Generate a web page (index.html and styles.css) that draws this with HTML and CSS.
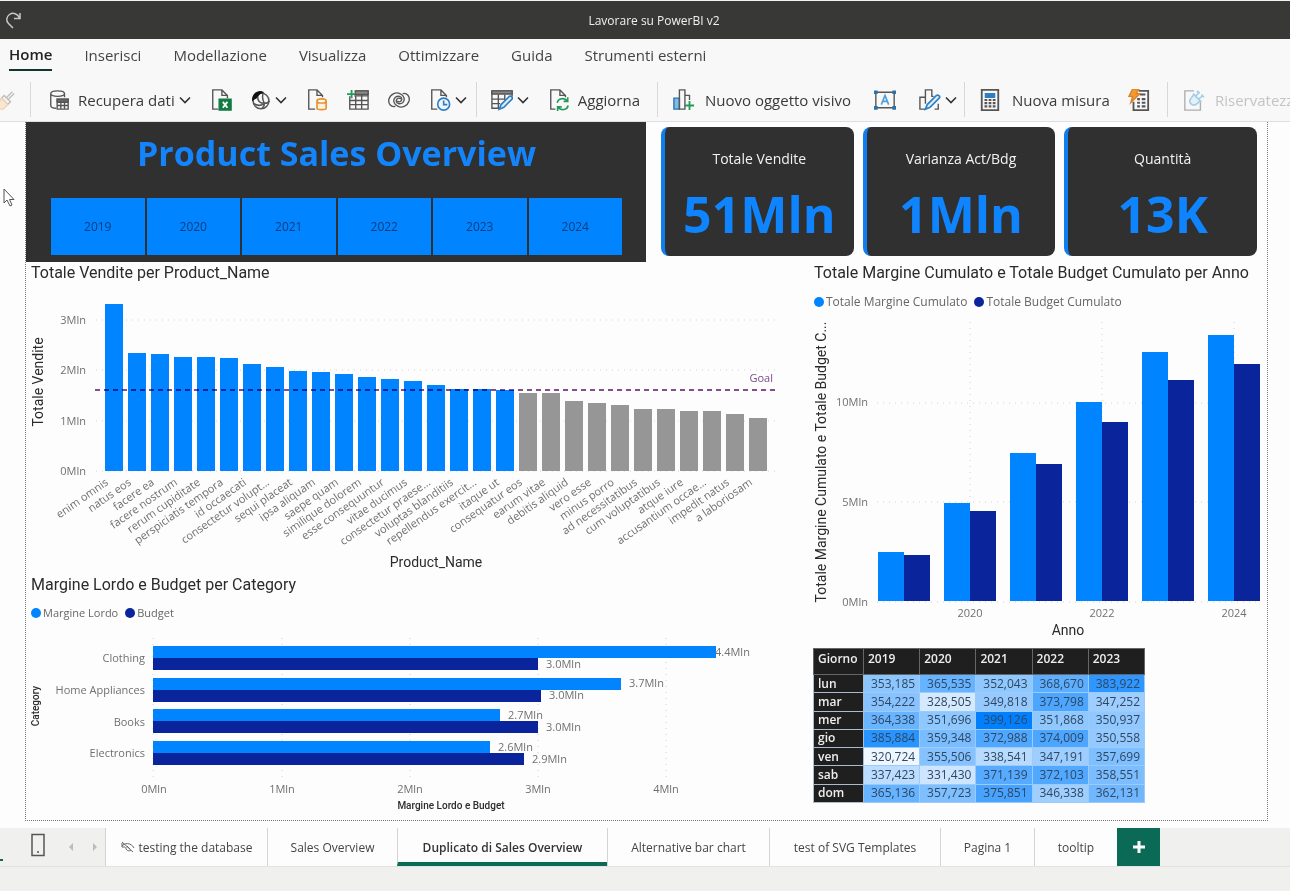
FILE: index.html
```html
<!DOCTYPE html>
<html lang="it">
<head>
<meta charset="utf-8">
<meta name="viewport" content="width=device-width, initial-scale=1">
<title>Lavorare su PowerBI v2</title>
<link rel="stylesheet" href="styles.css">
</head>
<body>
<header class="titlebar">
  <button class="redo" aria-label="Ripeti"><svg width="18" height="18" viewBox="0 0 18 18"><path d="M16 2v5.500h-6M15.500 7C14 3 9 1 5.500 3.500C2 6 2 10 4.500 12.500L9 17"/></svg></button>
  <h1>Lavorare su PowerBI v2</h1>
</header>

<nav class="menu">
  <button class="on">Home</button>
  <button>Inserisci</button>
  <button>Modellazione</button>
  <button>Visualizza</button>
  <button>Ottimizzare</button>
  <button>Guida</button>
  <button>Strumenti esterni</button>
</nav>

<div class="ribbon">
  <div class="group g-clip">
    <button aria-label="Copia formato"><svg class="ic faded" viewBox="0 0 24 24"><path d="M20 3l-6 6M22 5l-6 6" stroke="#777"/><path d="M11 7l7 7-3 3-7-7z" stroke="#777" fill="#eee"/><path d="M8 10l7 7-5 5H2z" fill="#f8d3a8" stroke="#e9a35c"/></svg></button>
  </div>
  <div class="group g-data">
    <button><svg class="ic" viewBox="0 0 24 24"><path d="M3 5c0-4 15-4 15 0s-15 4-15 0v13c0 2 3 3 6 3M18 5v4"/><path d="M10 11h12v11H10zM10 14.500h12M10 18h12M14 14.500V22M18 14.500V22"/><path d="M10 11h12v3H10z" fill="#666"/></svg><span>Recupera dati</span><svg class="chev" viewBox="0 0 12 8"><path d="M1 1.500l5 5 5-5"/></svg></button>
    <button aria-label="Cartella di lavoro Excel"><svg class="ic" viewBox="0 0 24 24"><path d="M9 22H3V1h10l6 6v3M13 1v6h6"/><path d="M10 11h13v12H10z" fill="#107c41" stroke="#107c41"/><path d="M14 14l5 6.500M19 14l-5 6.500" stroke="#fff" stroke-width="2"/></svg></button>
    <button aria-label="Hub dati OneLake"><svg class="ic sm" viewBox="0 0 24 24"><circle cx="12" cy="13" r="9.500" stroke-width="1.800"/><path d="M2 12C2 5 8 0 15 3c-4 0-6 2-7 5-1 2-4 2-6 4z" fill="#111" stroke="#111"/><path d="M8 8c0 5 3 8 8 8 3 0 5-1 6-3M15 3c-2 4-1 9 1 13M3 16c4 3 9 3 13 0M16 16c0 3-1 5-3 6" stroke-width="1.800"/></svg><svg class="chev" viewBox="0 0 12 8"><path d="M1 1.500l5 5 5-5"/></svg></button>
    <button aria-label="SQL Server"><svg class="ic" viewBox="0 0 24 24"><path d="M10 22H3V1h9l6 6v2M12 1v6h6"/><path d="M12 13v8c0 2 10 2 10 0v-8M12 13c0-3 10-3 10 0s-10 3-10 0" stroke="#e8922e" fill="#fdf1e2" stroke-width="1.800"/></svg></button>
    <button aria-label="Immetti dati"><svg class="ic" viewBox="0 0 24 24"><path d="M3 8v14h20V2H9M3 12.500h20M3 17h20M9.500 8v14M16 6v16M8 7.500h15"/><path d="M9 2h14v4H9z" fill="#888"/><path d="M5 1v9M0 5.500h9" stroke="#239a57" stroke-width="2"/></svg></button>
    <button aria-label="Dataverse"><svg class="ic" viewBox="0 0 24 24"><path d="M8 19c-5 1-8-3-7-8C3 5 9 3 13 5c5 2 6 7 3 10-3 2-7 1-7-2s3-4 5-2"/><path d="M16 5c5-1 8 3 7 8-2 6-8 8-12 6-5-2-6-7-3-10 3-2 7-1 7 2s-3 4-5 2"/></svg></button>
    <button aria-label="Origini recenti"><svg class="ic" viewBox="0 0 24 24"><path d="M9 22H3V1h10l6 6v2M13 1v6h6"/><circle cx="16" cy="16.500" r="6.500" stroke="#2f7fc0" fill="#eef6fd" stroke-width="1.800"/><path d="M16 12.500v4.500h4" stroke="#2f7fc0" stroke-width="1.800"/></svg><svg class="chev" viewBox="0 0 12 8"><path d="M1 1.500l5 5 5-5"/></svg></button>
  </div>
  <div class="group g-query">
    <button aria-label="Trasforma dati"><svg class="ic" viewBox="0 0 24 24"><path d="M9 21H1V2h22v6M1 11h14M1 16h9M8 6v15M15 6v6"/><path d="M1 2h22v3.500H1z" fill="#888"/><path d="M9 22l2-5L20 8c2-1 4 1 3 3l-9 9z" fill="#dceefb" stroke="#2f7fc0" stroke-width="1.800"/></svg><svg class="chev" viewBox="0 0 12 8"><path d="M1 1.500l5 5 5-5"/></svg></button>
    <button><svg class="ic" viewBox="0 0 24 24"><path d="M8 22H3V1h10l6 6v2M13 1v6h6"/><path d="M10 15c1-5 8-6 11-2M21.500 9v4.500H17M22 18c-1 5-8 6-11 2M10.500 24v-4.500H15" stroke="#239a57" stroke-width="1.800"/></svg><span>Aggiorna</span></button>
  </div>
  <div class="group g-insert">
    <button><svg class="ic" viewBox="0 0 24 24"><path d="M1 10h6v12H1z" fill="#7dbbea" stroke="#2b72ad"/><path d="M7 22V1h6v21zM13 7h5v5"/><path d="M18 13v10M13 18h10" stroke="#239a57" stroke-width="2"/></svg><span>Nuovo oggetto visivo</span></button>
    <button aria-label="Casella di testo"><svg class="ic" viewBox="0 0 24 24"><path d="M2 3.500h20v17H2z"/><path d="M0 1.500h4v4H0zM20 1.500h4v4h-4zM0 18.500h4v4H0zM20 18.500h4v4h-4z" fill="#2b72ad" stroke="none"/><path d="M8 17l4-10 4 10M9.500 13.500h5" stroke="#4d9fdd" stroke-width="1.800"/></svg></button>
    <button aria-label="Altri oggetti visivi"><svg class="ic" viewBox="0 0 24 24"><path d="M7 22H1V9h6V1h7v7h2M17 22h4v-6M7 9v7"/><path d="M7 22l2-5L19 7c2-1 5 1 3 3L12 20z" fill="#dceefb" stroke="#2f7fc0" stroke-width="1.800"/></svg><svg class="chev" viewBox="0 0 12 8"><path d="M1 1.500l5 5 5-5"/></svg></button>
  </div>
  <div class="group g-calc">
    <button><svg class="ic" viewBox="0 0 24 24"><path d="M3 1h18v22H3z" stroke-width="2"/><path d="M7 5h10v4H7z" fill="#2f7fc0" stroke="#2f7fc0"/><path d="M6 12h3M10.500 12h3M15 12h3M6 15.500h3M10.500 15.500h3M15 15.500h3M6 19h3M10.500 19h3M15 19h3" stroke-width="2.400"/></svg><span>Nuova misura</span></button>
    <button aria-label="Misura rapida"><svg class="ic" viewBox="0 0 24 24"><path d="M12 2h10v21H6v-9" stroke-width="2"/><path d="M13 6h6M10 11h3M15 11h4M10 15h3M15 15h4M10 19h3M15 19h4" stroke-width="2.400"/><path d="M5 0h7L9 5h4L3 15l2-7H1z" fill="#f59b2c" stroke="#d9822b"/></svg></button>
  </div>
  <div class="group g-sens">
    <button disabled><svg class="ic faded" viewBox="0 0 24 24"><path d="M12 2H2v21h17v-9"/><path d="M12 6l7 7-5 4c-4 2-8-2-6-6zM14 8l4-5M17 11l5-4M12 6l3 3M11 5l9 9M15 2l3 3M20 6l3 3" stroke="#3f9bd8" fill="#cfe8fa" stroke-width="1.800"/></svg><span>Riservatezza</span></button>
  </div>
</div>

<main class="canvas">
  <svg class="cursor" width="12" height="19" viewBox="0 0 12 19"><path d="M1 1v14l3-3 3 6 2-1-2.500-5.500H11z"/></svg>
  <div class="report">
    <div class="top">
      <section class="banner">
        <h2>Product Sales Overview</h2>
        <div class="years">
          <button>2019</button><button>2020</button><button>2021</button><button>2022</button><button>2023</button><button>2024</button>
        </div>
      </section>
      <div class="cards">
        <article><h3>Totale Vendite</h3><p>51Mln</p></article>
        <article><h3>Varianza Act/Bdg</h3><p>1Mln</p></article>
        <article><h3>Quantità</h3><p>13K</p></article>
      </div>
    </div>

    <div class="body">
      <div class="col">
        <section>
          <h2 class="vt">Totale Vendite per Product_Name</h2>
          <svg class="chart" viewBox="26 282 780 292">
            <g class="grid"><path d="M96 320H777M96 370H777M96 421H777M96 471H777"/></g>
            <g class="axis end"><text x="86" y="324">3Mln</text><text x="86" y="374">2Mln</text><text x="86" y="425">1Mln</text><text x="86" y="475">0Mln</text></g>
            <g fill="#0084ff">
              <path d="M105 304h18v167h-18zM128 353h18v118h-18zM151 354h18v117h-18zM174 357h18v114h-18zM197 357h18v114h-18zM220 358h18v113h-18zM243 364h18v107h-18zM266 367h18v104h-18zM289 371h18v100h-18zM312 372h18v99h-18zM335 374h18v97h-18zM358 377h18v94h-18zM381 379h18v92h-18zM404 381h18v90h-18zM427 385h18v86h-18zM450 389h18v82h-18zM473 389h18v82h-18zM496 390h18v81h-18z"/>
            </g>
            <g fill="#969696">
              <path d="M519 393h18v78h-18zM542 393h18v78h-18zM565 401h18v70h-18zM588 403h18v68h-18zM611 405h18v66h-18zM634 409h18v62h-18zM657 409h18v62h-18zM680 411h18v60h-18zM703 411h18v60h-18zM726 414h18v57h-18zM749 418h18v53h-18z"/>
            </g>
            <path class="goal" d="M95 390H777"/>
            <text class="goal-label" x="773" y="382">Goal</text>
            <g class="axis end cats">
              <text transform="translate(109 484) rotate(-35)">enim omnis</text>
              <text transform="translate(132 484) rotate(-35)">natus eos</text>
              <text transform="translate(155 484) rotate(-35)">facere ea</text>
              <text transform="translate(178 484) rotate(-35)">facere nostrum</text>
              <text transform="translate(201 484) rotate(-35)">rerum cupiditate</text>
              <text transform="translate(224 484) rotate(-35)">perspiciatis tempora</text>
              <text transform="translate(247 484) rotate(-35)">id occaecati</text>
              <text transform="translate(270 484) rotate(-35)">consectetur volupt...</text>
              <text transform="translate(293 484) rotate(-35)">sequi placeat</text>
              <text transform="translate(316 484) rotate(-35)">ipsa aliquam</text>
              <text transform="translate(339 484) rotate(-35)">saepe quam</text>
              <text transform="translate(362 484) rotate(-35)">similique dolorem</text>
              <text transform="translate(385 484) rotate(-35)">esse consequuntur</text>
              <text transform="translate(408 484) rotate(-35)">vitae ducimus</text>
              <text transform="translate(431 484) rotate(-35)">consectetur praese...</text>
              <text transform="translate(454 484) rotate(-35)">voluptas blanditiis</text>
              <text transform="translate(477 484) rotate(-35)">repellendus exercit...</text>
              <text transform="translate(500 484) rotate(-35)">itaque ut</text>
              <text transform="translate(523 484) rotate(-35)">consequatur eos</text>
              <text transform="translate(546 484) rotate(-35)">earum vitae</text>
              <text transform="translate(569 484) rotate(-35)">debitis aliquid</text>
              <text transform="translate(592 484) rotate(-35)">vero esse</text>
              <text transform="translate(615 484) rotate(-35)">minus porro</text>
              <text transform="translate(638 484) rotate(-35)">ad necessitatibus</text>
              <text transform="translate(661 484) rotate(-35)">cum voluptatibus</text>
              <text transform="translate(684 484) rotate(-35)">atque iure</text>
              <text transform="translate(707 484) rotate(-35)">accusantium occae...</text>
              <text transform="translate(730 484) rotate(-35)">impedit natus</text>
              <text transform="translate(753 484) rotate(-35)">a laboriosam</text>
            </g>
            <text class="name" x="436" y="567">Product_Name</text>
            <text class="name" transform="translate(43 382) rotate(-90)">Totale Vendite</text>
          </svg>
        </section>
        <section>
          <h2 class="vt">Margine Lordo e Budget per Category</h2>
          <ul class="legend small"><li>Margine Lordo</li><li class="dark">Budget</li></ul>
          <svg class="chart" viewBox="26 622 780 198">
            <g class="grid"><path d="M153 638V780M282 638V780M410 638V780M538 638V780M666 638V780"/></g>
            <g fill="#0084ff"><path d="M153 646h563v12H153zM153 678h468v12H153zM153 709h347v12H153zM153 741h337v12H153z"/></g>
            <g fill="#0a259c"><path d="M153 658h385v12H153zM153 690h388v12H153zM153 721h385v12H153zM153 753h371v12H153z"/></g>
            <g class="axis end cat"><text x="145" y="662">Clothing</text><text x="145" y="694">Home Appliances</text><text x="145" y="726">Books</text><text x="145" y="757">Electronics</text></g>
            <g class="axis"><text x="715" y="656">4.4Mln</text><text x="546" y="668">3.0Mln</text><text x="629" y="687">3.7Mln</text><text x="549" y="699">3.0Mln</text><text x="508" y="719">2.7Mln</text><text x="546" y="731">3.0Mln</text><text x="498" y="751">2.6Mln</text><text x="532" y="763">2.9Mln</text></g>
            <g class="axis mid"><text x="154" y="793">0Mln</text><text x="282" y="793">1Mln</text><text x="410" y="793">2Mln</text><text x="538" y="793">3Mln</text><text x="666" y="793">4Mln</text></g>
            <text class="name tiny" x="451" y="809">Margine Lordo e Budget</text>
            <text class="name tiny" transform="translate(39 706) rotate(-90)">Category</text>
          </svg>
        </section>
      </div>

      <div class="col right">
        <section>
          <h2 class="vt">Totale Margine Cumulato e Totale Budget Cumulato per Anno</h2>
          <ul class="legend"><li>Totale Margine Cumulato</li><li class="dark">Totale Budget Cumulato</li></ul>
          <svg class="chart" viewBox="806 312 461 332">
            <g class="grid"><path d="M877 403H1261M877 502H1261M877 602H1261M970 322V602M1102 322V602M1234 322V602"/></g>
            <g fill="#0084ff"><path d="M878 552h26v49h-26zM944 503h26v98h-26zM1010 453h26v148h-26zM1076 402h26v199h-26zM1142 352h26v249h-26zM1208 335h26v266h-26z"/></g>
            <g fill="#0a259c"><path d="M904 555h26v46h-26zM970 511h26v90h-26zM1036 464h26v137h-26zM1102 422h26v179h-26zM1168 380h26v221h-26zM1234 364h26v237h-26z"/></g>
            <g class="axis end"><text x="868" y="406">10Mln</text><text x="868" y="506">5Mln</text><text x="868" y="606">0Mln</text></g>
            <g class="axis mid"><text x="970" y="617">2020</text><text x="1102" y="617">2022</text><text x="1234" y="617">2024</text></g>
            <text class="name" x="1068" y="635">Anno</text>
            <text class="name" transform="translate(826 462) rotate(-90)">Totale Margine Cumulato e Totale Budget C...</text>
          </svg>
        </section>
        <table class="matrix">
          <thead><tr><th>Giorno</th><th>2019</th><th>2020</th><th>2021</th><th>2022</th><th>2023</th></tr></thead>
          <tbody>
            <tr><th>lun</th><td style="--t:41%">353,185</td><td style="--t:57%">365,535</td><td style="--t:40%">352,043</td><td style="--t:61%">368,670</td><td style="--t:81%">383,922</td></tr>
            <tr><th>mar</th><td style="--t:43%">354,222</td><td style="--t:10%">328,505</td><td style="--t:37%">349,818</td><td style="--t:68%">373,798</td><td style="--t:34%">347,252</td></tr>
            <tr><th>mer</th><td style="--t:56%">364,338</td><td style="--t:40%">351,696</td><td style="--t:100%">399,126</td><td style="--t:40%">351,868</td><td style="--t:39%">350,937</td></tr>
            <tr><th>gio</th><td style="--t:83%">385,884</td><td style="--t:49%">359,348</td><td style="--t:67%">372,988</td><td style="--t:68%">374,009</td><td style="--t:38%">350,558</td></tr>
            <tr><th>ven</th><td style="--t:0%">320,724</td><td style="--t:44%">355,506</td><td style="--t:23%">338,541</td><td style="--t:34%">347,191</td><td style="--t:47%">357,699</td></tr>
            <tr><th>sab</th><td style="--t:21%">337,423</td><td style="--t:14%">331,430</td><td style="--t:64%">371,139</td><td style="--t:66%">372,103</td><td style="--t:48%">358,551</td></tr>
            <tr><th>dom</th><td style="--t:57%">365,136</td><td style="--t:47%">357,723</td><td style="--t:70%">375,851</td><td style="--t:33%">346,338</td><td style="--t:53%">362,131</td></tr>
          </tbody>
        </table>
      </div>
    </div>
  </div>
</main>

<nav class="pages">
  <div class="views">
    <span class="view-mark"></span>
    <button aria-label="Layout per dispositivi mobili"><svg width="16" height="24" viewBox="0 0 16 24"><path d="M2 1.500h12v21H2z" fill="none" stroke="#555" stroke-width="1.500"/><path d="M7 19h2" stroke="#555" stroke-width="1.500"/></svg></button>
    <button aria-label="Pagina precedente"><svg width="6" height="10" viewBox="0 0 6 10"><path d="M5 1v8L1 5z" fill="#bbb"/></svg></button>
    <button aria-label="Pagina successiva"><svg width="6" height="10" viewBox="0 0 6 10"><path d="M1 1v8l4-4z" fill="#bbb"/></svg></button>
  </div>
  <button class="page"><svg width="14" height="12" viewBox="0 0 14 12"><path d="M1 1l11 10M1 5c2-3 9-4 12 2M5 6c-1 3 3 5 5 3M1 2v4h3M6 5l3 3" fill="none" stroke="#666"/></svg>testing the database</button>
  <button class="page">Sales Overview</button>
  <button class="page on">Duplicato di Sales Overview</button>
  <button class="page">Alternative bar chart</button>
  <button class="page">test of SVG Templates</button>
  <button class="page">Pagina 1</button>
  <button class="page">tooltip</button>
  <button class="add" aria-label="Nuova pagina"><svg width="12" height="12" viewBox="0 0 12 12"><path d="M6 0v12M0 6h12" stroke="#fff" stroke-width="3"/></svg></button>
</nav>
<footer class="status"></footer>
</body>
</html>
```
FILE: styles.css
```css
* { box-sizing: border-box; }
body {
  margin: 0;
  min-height: 100vh;
  display: flex;
  flex-direction: column;
  overflow-x: hidden;
  background: #fdfdfd;
  color: #333;
  font-family: "Open Sans", "Noto Sans", sans-serif;
}
button {
  border: 0;
  padding: 0;
  background: none;
  color: inherit;
  font: inherit;
  white-space: nowrap;
}
h1, h2, h3, p, ul { margin: 0; padding: 0; }

.titlebar {
  display: grid;
  grid-template-columns: 1fr auto 1fr;
  align-items: center;
  height: 39px;
  border-top: 1px solid #f0f4f0;
  background: #383836;
  color: #f0f0f0;
}
.titlebar h1 { padding-left: 18px; font-size: 12px; font-weight: 400; }
.redo { justify-self: start; height: 18px; margin-left: 4px; }
.redo path { fill: none; stroke: #c8c8c8; stroke-width: 1.5; }

.menu {
  display: flex;
  gap: 32px;
  height: 37px;
  padding: 0 9px;
  background: #f8f8f8;
  color: #444;
  font-size: 15px;
}
.menu button { height: 32px; }
.menu .on { border-bottom: 2px solid #12352f; color: #222; font-weight: 600; }

.ribbon {
  display: flex;
  height: 46px;
  border-bottom: 1px solid #dedede;
  background: #f8f8f8;
  color: #3a3a3a;
  font-size: 15px;
  overflow: hidden;
}
.group { display: flex; align-items: center; flex: none; margin: 6px 0 4px; border-right: 1px solid #d8d8d8; }
.group button { display: flex; align-items: center; }
.ic { width: 22px; height: 22px; fill: none; stroke: #555; stroke-width: 1.5; flex: none; }
.ic.sm { width: 20px; height: 20px; }
.faded { opacity: .45; }
.chev { width: 12px; height: 8px; fill: none; stroke: #333; stroke-width: 1.6; flex: none; }
.g-clip { width: 31px; padding-left: 0; overflow: hidden; }
.g-clip .ic { margin-left: -6px; }
.g-data { width: 446px; padding: 0 9px 0 17px; justify-content: space-between; }
.g-data button { gap: 4px; }
.g-data button span { padding-left: 4px; }
.g-query { width: 181px; padding: 0 17px 0 14px; justify-content: space-between; }
.g-query button { gap: 4px; }
.g-query span { padding-left: 4px; }
.g-insert { width: 307px; padding: 0 7px 0 15px; justify-content: space-between; }
.g-insert button { gap: 4px; }
.g-insert span { padding-left: 6px; }
.g-calc { width: 203px; padding: 0 17px 0 14px; justify-content: space-between; }
.g-calc button { gap: 11px; }
.g-sens { padding-left: 15px; border: 0; color: #c4c4c4; }
.g-sens button { gap: 10px; }

.canvas { position: relative; flex: 1; padding: 0 22px 7px 25px; }
.cursor { position: absolute; left: 3px; top: 66px; fill: #fff; stroke: #555; }
.report { border: 1px dotted #777; border-top: 0; }

.top { display: grid; grid-template-columns: 620fr 621fr; }
.banner { height: 140px; padding: 7px 24px 6px 25px; background: #303030; }
.banner h2 { height: 69px; line-height: 48px; color: #1484fa; font-size: 34px; font-weight: 700; text-align: center; }
.years { display: grid; grid-template-columns: repeat(6, 1fr); gap: 2px; }
.years button { height: 57px; background: #0084ff; color: #0f3d78; font-size: 12px; }
.cards { display: grid; grid-template-columns: repeat(3, 1fr); gap: 9px; margin: 5px 10px 0 15px; height: 129px; }
.cards article { padding-top: 22px; border-left: 4px solid #0f7ff0; border-radius: 8px; background: #303030; text-align: center; }
.cards h3 { line-height: 20px; color: #f2f2f2; font-size: 14px; font-weight: 400; }
.cards p { line-height: 60px; margin-top: 15px; color: #0f84ff; font-size: 50px; font-weight: 700; }

.body { display: grid; grid-template-columns: 780fr 461fr; }
.vt { height: 20px; padding-left: 5px; color: #2b2b2b; font: 400 16px/22px "Roboto", sans-serif; white-space: nowrap; }
.right .vt { padding-left: 8px; }
.chart { display: block; width: 100%; height: auto; overflow: visible; }
.grid { fill: none; stroke: #d2d2d2; stroke-dasharray: 1 5; }
.goal { fill: none; stroke: #8a4a95; stroke-width: 2; stroke-dasharray: 5 4; mix-blend-mode: multiply; }
.goal-label { fill: #7a4a8a; font-size: 11px; text-anchor: end; }
.axis { fill: #707070; font-size: 11px; }
.end { text-anchor: end; }
.mid { text-anchor: middle; }
.name { fill: #2b2b2b; font-family: "Roboto", sans-serif; font-size: 14px; text-anchor: middle; }
.tiny { font-size: 10px; font-weight: 500; }

.legend { display: flex; gap: 7px; padding: 9px 0 0 8px; height: 30px; color: #666; font-size: 12px; line-height: 20px; list-style: none; }
.legend.small { height: 28px; padding: 9px 0 0 5px; font-size: 11px; }
.legend li { display: flex; align-items: center; gap: 2px; }
.legend li::before { content: ""; width: 10px; height: 10px; border-radius: 50%; background: #0084ff; }
.legend .dark::before { background: #0a259c; }

.matrix { width: 332px; height: 155px; margin: 4px 0 0 7px; border-collapse: collapse; table-layout: fixed; background: #8fc4f8; font-size: 12px; line-height: 16px; }
.matrix th, .matrix td { padding: 0; border: 1px solid #a9bdd0; }
.matrix th { padding-left: 4px; background: #1f1f1f; color: #eee; font-weight: 600; text-align: left; }
.matrix thead th { height: 26px; padding-bottom: 6px; border-color: #666; }
.matrix th:first-child { width: 50px; }
.matrix td { padding-right: 4px; border-color: #9ccbf8; background: color-mix(in srgb, #0080ff var(--t), #eef6ff); color: #31475f; text-align: right; }

.pages {
  display: grid;
  grid-template-columns: 105px 162px 130px 210px 162px 171px 94px 83px 43px;
  height: 38px;
  background: #f0f0ee;
  color: #444;
  font-size: 12px;
}
.views { display: flex; align-items: center; }
.views button { display: flex; }
.views button:nth-of-type(1) { margin: 0 22px 4px 27px; }
.views button:nth-of-type(2) { margin-right: 18px; }
.view-mark { align-self: end; width: 3px; height: 2px; margin-bottom: 5px; background: #0b6a56; }
.page { display: flex; align-items: center; justify-content: center; gap: 4px; border-left: 1px solid #d4d4d4; background: #fdfdfd; }
.page.on { border-bottom: 4px solid #0b6a56; padding-top: 4px; font-weight: 600; color: #333; }
.add { display: flex; align-items: center; justify-content: center; background: #0b6a56; }
.status { height: 25px; border-top: 1px solid #e2e2e0; background: #f0f0ee; }
```
